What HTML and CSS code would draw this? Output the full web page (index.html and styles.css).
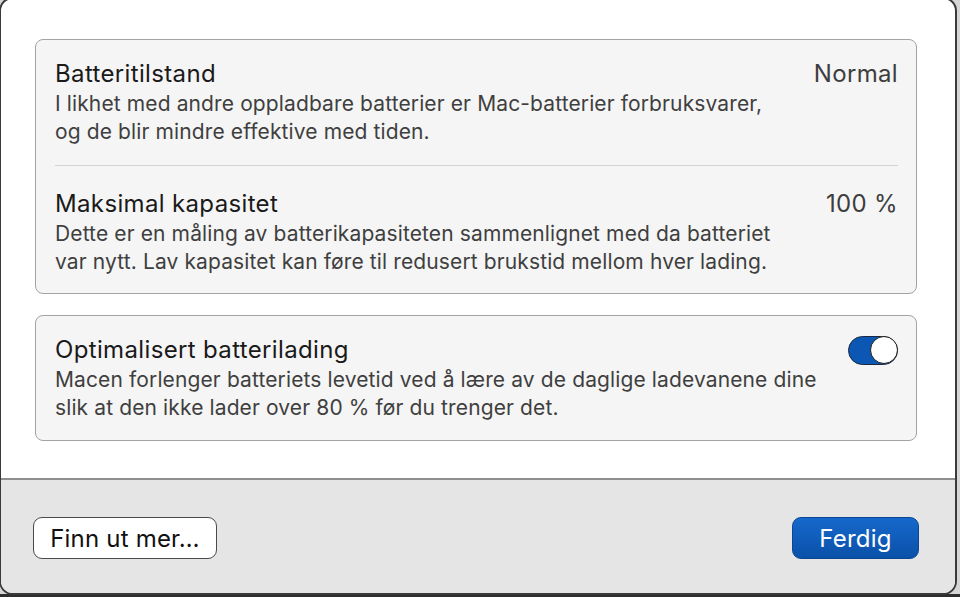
FILE: index.html
```html
<!DOCTYPE html>
<html lang="no">
<head>
<meta charset="utf-8">
<title>Batteri</title>
<link rel="stylesheet" href="styles.css">
</head>
<body>
<div class="window">
  <main class="content">
    <section class="card">
      <div class="row">
        <div class="row-text">
          <div class="row-title">Batteritilstand</div>
          <div class="row-desc">I likhet med andre oppladbare batterier er Mac-batterier forbruksvarer,<br>og de blir mindre effektive med tiden.</div>
        </div>
        <div class="row-value">Normal</div>
      </div>
      <div class="divider"></div>
      <div class="row">
        <div class="row-text">
          <div class="row-title">Maksimal kapasitet</div>
          <div class="row-desc">Dette er en måling av batterikapasiteten sammenlignet med da batteriet<br>var nytt. Lav kapasitet kan føre til redusert brukstid mellom hver lading.</div>
        </div>
        <div class="row-value">100 %</div>
      </div>
    </section>
    <section class="card">
      <div class="row">
        <div class="row-text">
          <div class="row-title">Optimalisert batterilading</div>
          <div class="row-desc">Macen forlenger batteriets levetid ved å lære av de daglige ladevanene dine<br>slik at den ikke lader over 80 % før du trenger det.</div>
        </div>
        <div class="toggle" role="switch" aria-checked="true"><span class="knob"></span></div>
      </div>
    </section>
  </main>
  <footer class="footer">
    <button class="btn btn-plain">Finn ut mer…</button>
    <button class="btn btn-primary">Ferdig</button>
  </footer>
</div>
</body>
</html>
```
FILE: styles.css
```css
html, body {
  margin: 0;
  padding: 0;
}
body {
  width: 960px;
  height: 597px;
  overflow: hidden;
  background: linear-gradient(to bottom, #d6d6d6 0, #d6d6d6 594px, #2e2e2e 594px);
  font-family: "Inter", "Noto Sans", "Liberation Sans", sans-serif;
}
.window {
  box-sizing: border-box;
  width: 958px;
  height: 598px;
  margin: -3px 0 0 -1px;
  background: #ffffff;
  border: 2px solid #3a3a3a;
  border-radius: 14px;
  overflow: hidden;
  display: flex;
  flex-direction: column;
}
.content {
  flex: 1;
  padding: 40px 38px 0 34px;
  display: flex;
  flex-direction: column;
  gap: 21px;
}
.card {
  background: #f5f5f5;
  border: 1.5px solid #a3a3a3;
  border-radius: 8px;
  padding: 18px 18px 17.5px 19px;
}
.row {
  display: flex;
  justify-content: space-between;
  align-items: flex-start;
}
.row-title {
  font-size: 24px;
  line-height: 32px;
  letter-spacing: 0.35px;
  color: #1a1a1a;
}
.row-desc {
  font-size: 21px;
  line-height: 28px;
  letter-spacing: 0.12px;
  color: #3f3f3f;
}
.row-value {
  font-size: 24px;
  line-height: 32px;
  letter-spacing: 0.35px;
  color: #3d3d3d;
}
.divider {
  height: 1.5px;
  background: #d3d3d3;
  margin: 18.5px 0 21.5px;
}
.toggle {
  box-sizing: border-box;
  width: 50px;
  height: 29px;
  margin-top: 2px;
  border-radius: 15px;
  background: #0b57b3;
  border: 1.5px solid #1c2a40;
  position: relative;
}
.knob {
  position: absolute;
  right: -1px;
  top: -1px;
  box-sizing: border-box;
  width: 28px;
  height: 28px;
  border-radius: 50%;
  background: #ffffff;
  border: 1.5px solid #1a1a1a;
}
.footer {
  height: 115px;
  box-sizing: border-box;
  background: #e5e5e5;
  border-top: 2px solid #8e8e8e;
  padding: 37px 36px 0 32px;
  display: flex;
  justify-content: space-between;
  align-items: flex-start;
}
.btn {
  box-sizing: border-box;
  height: 42px;
  border-radius: 9px;
  font-family: inherit;
  font-size: 24px;
  letter-spacing: 0.2px;
  padding: 0 12px;
  cursor: pointer;
}
.btn-plain {
  width: 184px;
  background: #ffffff;
  color: #111111;
  border: 1.5px solid #4a4a4a;
}
.btn-primary {
  width: 127px;
  background: linear-gradient(#1668cc, #0a51a8);
  color: #ffffff;
  border: 1px solid #0a4694;
}
```
